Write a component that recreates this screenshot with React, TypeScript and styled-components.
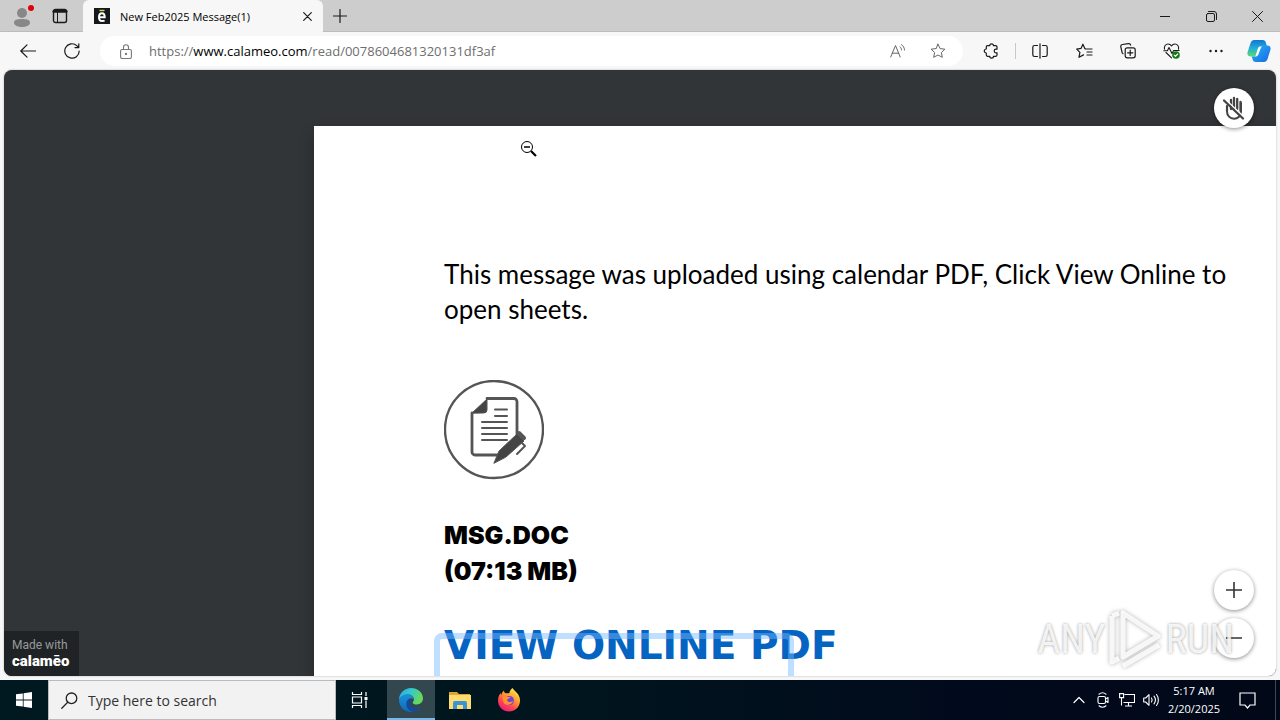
import React from 'react';
import styled, { createGlobalStyle } from 'styled-components';

const ui = '"Open Sans", "Noto Sans", sans-serif';

const GlobalStyle = createGlobalStyle`
  * { box-sizing: border-box; }
  html, body { margin: 0; padding: 0; }
  body { font-family: ${ui}; background: #f7f7f7; color: #000; }
  button, input { font: inherit; color: inherit; border: 0; background: none; padding: 0; margin: 0; }
  svg { display: block; flex: none; }
`;

const Screen = styled.div`
  display: flex;
  flex-direction: column;
  height: 100vh;
  overflow: hidden;
`;

/* ---------- browser chrome ---------- */

const TabBar = styled.header`
  display: flex;
  flex: none;
  height: 32px;
  background: #cdcdcd;
  box-shadow: inset 0 -1px 0 #bcbcbc;
`;

const IconButton = styled.button<{ $w?: number; $h?: number; $color?: string }>`
  display: flex;
  align-items: center;
  justify-content: center;
  flex: none;
  width: ${(p) => p.$w ?? 44}px;
  height: ${(p) => p.$h ?? 32}px;
  color: ${(p) => p.$color ?? '#1a1a1a'};
`;

const Tab = styled.div`
  display: flex;
  align-items: center;
  width: 240px;
  margin-left: 8px;
  padding: 0 4px 0 11px;
  border-radius: 6px 6px 0 0;
  background: #f7f7f7;
  font-size: 11px;
`;

const TabTitle = styled.span`
  flex: 1;
  margin-left: 10px;
  white-space: nowrap;
`;

const Spacer = styled.div`
  flex: 1;
`;

const Toolbar = styled.nav`
  display: flex;
  align-items: center;
  flex: none;
  height: 38px;
  padding-left: 6px;
  background: #f7f7f7;
`;

const AddressBar = styled.div`
  display: flex;
  align-items: center;
  flex: 1;
  height: 30px;
  margin-left: 6px;
  margin-right: 6px;
  padding: 0 5px 0 6px;
  border-radius: 15px;
  background: #fff;
`;

const Url = styled.div`
  flex: 1;
  margin-left: 3px;
  font-size: 13px;
  color: #6e6e6e;
  white-space: nowrap;

  b { font-weight: 400; color: #000; }
`;

const Divider = styled.i`
  width: 1px;
  height: 16px;
  margin: 0 2px;
  background: #c8c8c8;
`;

/* ---------- document viewer ---------- */

const Viewer = styled.main`
  position: relative;
  display: flex;
  flex: 1;
  min-height: 0;
  margin: 0 4px 4px;
  padding: 56px 0 0 310px;
  overflow: hidden;
  border-radius: 8px;
  background: #313537;
  box-shadow: 0 0 2px #aaa;
`;

const Paper = styled.article`
  flex: 1;
  padding: 131px 20px 0 130px;
  background: #fff;
  box-shadow: 0 8px 14px rgba(0, 0, 0, 0.25);
`;

const Message = styled.p`
  margin: 0;
  font: 26px/35px Lato, Carlito, sans-serif;
`;

const DocBadge = styled.svg`
  margin-top: 53px;
`;

const FileInfo = styled.p`
  margin: 37px 0 0;
  font: 900 25px/36px Inter, sans-serif;
`;

const LinkRow = styled.div`
  position: relative;
  margin-top: 32px;
`;

const ViewLink = styled.a`
  color: #0563c1;
  font: 700 39px/50px "DejaVu Sans", sans-serif;
  text-decoration: none;
  white-space: nowrap;
`;

const LinkArea = styled.span`
  position: absolute;
  top: 12px;
  left: -10px;
  width: 360px;
  height: 80px;
  border: 6px solid rgba(115, 185, 255, 0.45);
  border-radius: 8px;
  pointer-events: none;
`;

const Pointer = styled.svg`
  position: absolute;
  top: 70px;
  left: 516px;
`;

const RoundButton = styled.button`
  display: flex;
  align-items: center;
  justify-content: center;
  width: 40px;
  height: 40px;
  border-radius: 50%;
  background: #fff;
  color: #333;
  box-shadow: 0 1px 4px rgba(0, 0, 0, 0.45);
`;

const TopControl = styled.div`
  position: absolute;
  top: 18px;
  right: 22px;
`;

const ZoomControls = styled.div`
  position: absolute;
  right: 22px;
  bottom: 18px;
  display: grid;
  gap: 8px;
`;

const MadeWith = styled.a`
  position: absolute;
  left: 0;
  bottom: 0;
  display: flex;
  flex-direction: column;
  width: 75px;
  height: 45px;
  padding: 6px 8px;
  background: #202325;
  color: #989a9b;
  font: 12px/16px Roboto, sans-serif;
  text-decoration: none;
  white-space: nowrap;

  strong { color: #fff; font: 900 15px/16px Roboto, sans-serif; }
`;

const Watermark = styled.div`
  position: absolute;
  right: 42px;
  bottom: 4px;
  display: flex;
  align-items: center;
  gap: 2px;
  color: rgba(255, 255, 255, 0.85);
  font: 40px/64px "Liberation Sans Narrow", "Roboto Condensed", sans-serif;
  text-shadow: 0 0 3px rgba(0, 0, 0, 0.4);
  pointer-events: none;

  svg { filter: drop-shadow(0 0 2px rgba(0, 0, 0, 0.35)); }
`;

/* ---------- taskbar ---------- */

const Taskbar = styled.footer`
  display: flex;
  align-items: stretch;
  flex: none;
  height: 40px;
  background: linear-gradient(90deg, #001920 0%, #00151e 45%, #010a1c 75%, #010818 100%);
  color: #fff;
`;

const TaskButton = styled.button<{ $active?: boolean }>`
  display: flex;
  align-items: center;
  justify-content: center;
  flex: none;
  width: 48px;
  margin: 0 1px 0 ${(p) => (p.$active ? 2 : 0)}px;
  background: ${(p) => (p.$active ? '#33474e' : 'transparent')};
  box-shadow: ${(p) => (p.$active ? 'inset 0 -2px 0 #76b9ed' : 'none')};
`;

const Search = styled.label`
  display: flex;
  align-items: center;
  gap: 10px;
  flex: none;
  width: 288px;
  margin: 0 0 0 -1px;
  padding-left: 12px;
  border: 1px solid #b8bcbe;
  background: #f2f2f2;
  color: #222;
`;

const SearchInput = styled.input`
  flex: 1;
  min-width: 0;
  outline: 0;
  font-size: 14px;

  &::placeholder { color: #333; opacity: 1; }
`;

const Tray = styled.div`
  display: flex;
  align-items: center;
  margin-left: auto;
`;

const Clock = styled.time`
  width: 62px;
  font-size: 11px;
  line-height: 18px;
  text-align: center;
  white-space: nowrap;
`;

const DesktopEdge = styled.i`
  width: 1px;
  height: 40px;
  margin: 0 4px 0 6px;
  background: #3f4654;
`;

const line = { fill: 'none', stroke: 'currentColor', strokeLinecap: 'round', strokeLinejoin: 'round' } as const;

function BrowserTabs() {
  return (
    <TabBar>
      <IconButton $w={44} aria-label="Profile">
        <svg width="24" height="26" viewBox="0 0 24 26">
          <circle cx="12" cy="10" r="5" fill="#888" />
          <path d="M4 19.500c0-3 4-3.500 8-3.500s8 .5 8 3.500c0 3-4 4.500-8 4.500s-8-1.500-8-4.500z" fill="#888" />
          <circle cx="21" cy="5" r="3" fill="#e3000b" />
        </svg>
      </IconButton>
      <IconButton $w={31} aria-label="Tab actions">
        <svg width="16" height="16" viewBox="0 0 16 16" {...line}>
          <rect x="1.500" y="1.500" width="13" height="13" rx="2" strokeWidth="1.400" />
          <path d="M2 3.200h12" strokeWidth="3" />
          <path d="M5.500 4v10" />
        </svg>
      </IconButton>
      <Tab>
        <svg width="16" height="16" viewBox="0 0 16 16">
          <path d="M0 0h16v16H0z" fill="#15191b" />
          <path d="M5.500 2.500h5" stroke="#d5e04d" strokeWidth="1.400" />
          <path d="M5.500 9.300h5.200c0-3-1-4-2.700-4s-3 1.200-3 3.900c0 2.600 1.200 3.900 3.200 3.900 1 0 1.800-.2 2.400-.6" fill="none" stroke="#fff" strokeWidth="2" />
        </svg>
        <TabTitle>New Feb2025 Message(1)</TabTitle>
        <IconButton $w={24} $h={24} aria-label="Close tab">
          <svg width="9" height="9" viewBox="0 0 9 9" {...line} strokeWidth="1.200"><path d="M.7.7l7.600 7.600M8.300.7L.7 8.300" /></svg>
        </IconButton>
      </Tab>
      <IconButton $w={34} aria-label="New tab">
        <svg width="14" height="14" viewBox="0 0 14 14" {...line} strokeWidth="1.200"><path d="M7 .5v13M.5 7h13" /></svg>
      </IconButton>
      <Spacer />
      <IconButton $w={46} aria-label="Minimize">
        <svg width="10" height="10" viewBox="0 0 10 10" {...line}><path d="M0 5.500h10" /></svg>
      </IconButton>
      <IconButton $w={46} aria-label="Restore">
        <svg width="11" height="11" viewBox="0 0 11 11" {...line}>
          <rect x=".5" y="2.500" width="8" height="8" rx="1.500" />
          <path d="M2.500.500H8a2.500 2.500 0 0 1 2.500 2.500v5.500" />
        </svg>
      </IconButton>
      <IconButton $w={46} aria-label="Close window">
        <svg width="11" height="11" viewBox="0 0 11 11" {...line}><path d="M.5.5l10 10M10.500.5l-10 10" /></svg>
      </IconButton>
    </TabBar>
  );
}

const star = 'M8 1.200l2.100 4.400 4.800.6-3.500 3.300.9 4.800L8 12l-4.300 2.300.9-4.800L1.100 6.200l4.800-.6z';

function BrowserToolbar() {
  return (
    <Toolbar>
      <IconButton aria-label="Back">
        <svg width="16" height="14" viewBox="0 0 16 14" {...line} strokeWidth="1.200"><path d="M15.500 7H.8M7 .8L.8 7 7 13.200" /></svg>
      </IconButton>
      <IconButton aria-label="Refresh">
        <svg width="16" height="16" viewBox="0 0 16 16" {...line} strokeWidth="1.200"><path d="M15.200 8A7.200 7.200 0 1 1 12.800 2.600L14.500 4.300M14.800.8v3.800H11" /></svg>
      </IconButton>
      <AddressBar>
        <IconButton $w={40} $h={28} $color="#777" aria-label="View site information">
          <svg width="12" height="15" viewBox="0 0 12 15" {...line} strokeWidth="1.100">
            <rect x=".6" y="5.500" width="10.800" height="9" rx="1.500" />
            <path d="M3.500 5.500V3.200a2.500 2.500 0 0 1 5 0v2.300" />
            <circle cx="6" cy="10" r=".6" fill="currentColor" />
          </svg>
        </IconButton>
        <Url role="textbox" aria-label="Address">https://<b>www.calameo.com</b>/read/0078604681320131df3af</Url>
        <IconButton $w={40} $h={28} $color="#666" aria-label="Read aloud">
          <svg width="16" height="14" viewBox="0 0 16 14" {...line}>
            <path d="M.7 13L5.500 1.500 10.200 13M2.300 9.200h6.400" />
            <path d="M10 2.800c1 .8 1.500 1.900 1.500 3.200M11.500.700c1.900 1.200 3 3.200 3 5.300" />
          </svg>
        </IconButton>
        <IconButton $w={40} $h={28} $color="#666" aria-label="Add to favorites">
          <svg width="16" height="16" viewBox="0 0 16 16" {...line}><path d={star} /></svg>
        </IconButton>
      </AddressBar>
      <IconButton aria-label="Extensions">
        <svg width="16" height="16" viewBox="0 0 16 16" {...line} strokeWidth="1.200">
          <path d="M4.500 2.700h2.200a1.900 1.900 0 0 1 3.800 0h2.300a1.200 1.200 0 0 1 1.200 1.200v2.300h-1a1.800 1.800 0 0 0 0 3.600h1v2.300a1.200 1.200 0 0 1-1.200 1.200h-2.300a1.900 1.900 0 0 1-3.800 0H4.500a1.200 1.200 0 0 1-1.200-1.200V10a2 2 0 0 1 0-4V3.900a1.200 1.200 0 0 1 1.200-1.200z" />
        </svg>
      </IconButton>
      <Divider />
      <IconButton aria-label="Split screen">
        <svg width="16" height="16" viewBox="0 0 16 16" {...line} strokeWidth="1.200"><path d="M8 .8v14.400M5.500 2.500h-3a1.700 1.700 0 0 0-1.700 1.700v7.600a1.700 1.700 0 0 0 1.700 1.700h3M10.500 2.500h3a1.700 1.700 0 0 1 1.700 1.700v7.600a1.700 1.700 0 0 1-1.700 1.700h-3" /></svg>
      </IconButton>
      <IconButton aria-label="Favorites">
        <svg width="17" height="16" viewBox="0 0 17 16" {...line} strokeWidth="1.200"><path d="M10 6h6M11 9h5M11 12h5M9.500 5.800L8.800 5.600 6.900 1.200 5 5.400l-4.300.7 3.200 3.200-.9 5 4.500-2.400" /></svg>
      </IconButton>
      <IconButton aria-label="Collections">
        <svg width="16" height="16" viewBox="0 0 16 16" {...line} strokeWidth="1.200">
          <rect x="5.200" y="4.800" width="10" height="10" rx="2" />
          <path d="M10.200 7.200v5.200M7.600 9.800h5.200M3 10.700A2 2 0 0 1 2 9L.8 3.800A2 2 0 0 1 2.300 1.500L8.500.7a2 2 0 0 1 2.200 1.500" />
        </svg>
      </IconButton>
      <IconButton aria-label="Browser essentials">
        <svg width="18" height="16" viewBox="0 0 18 16" {...line} strokeWidth="1.100">
          <path d="M1.500 6.200C.8 3.200 2.700 1 5 1c1.700 0 2.800.8 3.500 2C9.200 1.800 10.300 1 12 1c2.300 0 4.200 2.200 3.500 5.200M3 9.500l5.500 5.300M.8 7.800h3.600L6 4.500l3 6 1.600-3h5.600" />
          <circle cx="13" cy="12" r="3.800" fill="#117a16" stroke="none" />
          <path d="M11.300 12.100l1.200 1.200 2.200-2.300" stroke="#fff" />
        </svg>
      </IconButton>
      <IconButton aria-label="Settings and more">
        <svg width="14" height="4" viewBox="0 0 14 4" fill="currentColor"><circle cx="1.500" cy="2" r="1.200" /><circle cx="7" cy="2" r="1.200" /><circle cx="12.500" cy="2" r="1.200" /></svg>
      </IconButton>
      <IconButton $w={42} aria-label="Copilot">
        <svg width="24" height="22" viewBox="0 0 26 24">
          <defs>
            <linearGradient id="cpA" x1="0" y1="0" x2="0" y2="1"><stop offset="0" stopColor="#1275d8" /><stop offset=".5" stopColor="#22aed5" /><stop offset="1" stopColor="#5cdc70" /></linearGradient>
            <linearGradient id="cpB" x1="0" y1="0" x2="1" y2="1"><stop offset="0" stopColor="#27b5f0" /><stop offset="1" stopColor="#1767e8" /></linearGradient>
          </defs>
          <path d="M8 0h9c2 0 3 1 3.500 3l1.200 4H18c-2 0-3 1-3.700 3l-1.700 5c-.6 2-1.600 3-3.600 3H4c-3 0-4.300-2-3.400-5L3.500 4C4.200 1.500 5.500 0 8 0z" fill="url(#cpA)" />
          <path d="M18 6h4c3 0 4.300 2 3.400 5l-2.800 9c-.7 2.500-2 4-4.500 4H9.500c-2 0-3-1-3.500-3l-1-3h4c2 0 3-1 3.600-3l1.700-5C15 7 16 6 18 6z" fill="url(#cpB)" />
          <path d="M13.500 7H17c-1.500.3-2.200 1.500-2.600 2.700L12.500 15c-.6 1.700-1.500 2.700-3.500 3h0l2.500-8c.5-1.500 1-2.600 2-3z" fill="#fff" />
        </svg>
      </IconButton>
    </Toolbar>
  );
}

function DocumentViewer() {
  return (
    <Viewer>
      <Paper>
        <Message>This message was uploaded using calendar PDF, Click View Online to open sheets.</Message>
        <DocBadge width="100" height="100" viewBox="0 0 100 100" fill="none" stroke="#555" strokeLinecap="round" strokeLinejoin="round">
          <ellipse cx="50" cy="49.500" rx="49" ry="48.500" strokeWidth="2.400" />
          <path d="M43 18.500h27a3 3 0 0 1 3 3v34M56 75H31a3 3 0 0 1-3-3V33" strokeWidth="2.800" />
          <path d="M28 33l15-14v11a3 3 0 0 1-3 3z" fill="#444" />
          <path d="M51 29.500h12M51 36h12M38 42h25M38 48h25M38 54h25M38 60h25" strokeWidth="2" />
          <path d="M50 83l5-12 18-17 7 7-18 16z" fill="#444" strokeWidth="1" />
          <path d="M75 53l5 5" strokeWidth="4" />
          <path d="M78 63l3 3-8 8" strokeWidth="2" />
        </DocBadge>
        <FileInfo>MSG.DOC<br />(07:13 MB)</FileInfo>
        <LinkRow>
          <ViewLink href="#view">VIEW ONLINE PDF</ViewLink>
          <LinkArea />
        </LinkRow>
      </Paper>

      <Pointer width="18" height="18" viewBox="0 0 18 18" fill="none" stroke="#000">
        <circle cx="7" cy="7" r="5.500" />
        <path d="M4 7h6" strokeWidth="1.600" />
        <path d="M11 11l5 5" strokeWidth="2.200" />
      </Pointer>

      <TopControl>
        <RoundButton aria-label="Disable hand tool">
          <svg width="24" height="26" viewBox="0 0 24 26" {...line} stroke="#444">
            <path d="M5 11.500v5c0 4 3 7.200 7 7.200s7-3 7-7.200V8" strokeWidth="2" />
            <path d="M9 5v9M12 3v11M15.200 4v10M18.500 7v9" strokeWidth="2.300" />
            <path d="M5 11v5" strokeWidth="2.200" />
            <path d="M3.500 4.500l19 18" stroke="#fff" strokeWidth="1.500" />
            <path d="M2 5.500l19 18" strokeWidth="2.300" />
          </svg>
        </RoundButton>
      </TopControl>

      <ZoomControls>
        <RoundButton aria-label="Zoom in">
          <svg width="16" height="16" viewBox="0 0 16 16" stroke="currentColor" strokeWidth="1.600"><path d="M8 0v16M0 8h16" /></svg>
        </RoundButton>
        <RoundButton aria-label="Zoom out">
          <svg width="16" height="16" viewBox="0 0 16 16" stroke="currentColor" strokeWidth="1.600"><path d="M0 8h16" /></svg>
        </RoundButton>
      </ZoomControls>

      <Watermark>
        <span>ANY</span>
        <svg width="56" height="64" viewBox="0 0 56 64" fill="none" stroke="#fff" strokeOpacity=".85" strokeWidth="5" strokeLinejoin="round">
          <path d="M4 8v46l7-4M4 8l7-3M15 5v44L50 28z" />
          <path d="M15 58L51 37" />
        </svg>
        <span>RUN</span>
      </Watermark>

      <MadeWith href="#calameo">
        Made with
        <strong>calamēo</strong>
      </MadeWith>
    </Viewer>
  );
}

function WindowsTaskbar() {
  return (
    <Taskbar>
      <TaskButton aria-label="Start">
        <svg width="16" height="16" viewBox="0 0 16 16" fill="#fff"><path d="M0 2.300l6.800-.9v6.200H0zM7.600 1.200L16 0v7.600H7.600zM0 8.400h6.800v6.200L0 13.700zM7.600 8.400H16V16l-8.400-1.200z" /></svg>
      </TaskButton>
      <Search>
        <svg width="17" height="17" viewBox="0 0 17 17" {...line} strokeWidth="1.300"><circle cx="10.500" cy="6.300" r="5.300" /><path d="M6.700 10.200L.8 16.200" /></svg>
        <SearchInput type="text" placeholder="Type here to search" aria-label="Type here to search" />
      </Search>
      <TaskButton aria-label="Task view">
        <svg width="18" height="16" viewBox="0 0 18 16" fill="none" stroke="#fff" strokeWidth="1.200">
          <path d="M1.500 0v2.500h9V0M1.500 16v-2.500h9V16M1.500 5h9v6h-9zM15 0v4M15 8.500V16" />
          <path d="M13.500 5h3v3h-3z" fill="#fff" stroke="none" />
        </svg>
      </TaskButton>
      <TaskButton $active aria-label="Microsoft Edge">
        <svg width="24" height="24" viewBox="0 0 24 24">
          <defs>
            <linearGradient id="edA" x1="0" y1="0" x2="1" y2=".4"><stop offset="0" stopColor="#2aa8e0" /><stop offset=".5" stopColor="#35c9cf" /><stop offset="1" stopColor="#67d958" /></linearGradient>
            <linearGradient id="edB" x1="0" y1="0" x2="0" y2="1"><stop offset="0" stopColor="#1b91dd" /><stop offset="1" stopColor="#1167b8" /></linearGradient>
          </defs>
          <path d="M0 12C0 5 5.400 0 12 0s12 4.700 12 10.300c0 4-3 6.200-6 6.200-2.500 0-4.300-.8-4.300-1.800 0-.8 1.200-1.200 1.200-3.200C15 8.500 12.200 6.500 9 6.500 4.500 6.500 1 9 0 12z" fill="url(#edA)" />
          <path d="M0 12c.7-3.500 4.300-5.500 8.500-5.500 3.500 0 6 2 6.300 4.500C14 9.800 8.500 10 8.500 15c0 5 5 7.500 13 3.800C19.300 22 16 24 12 24 5.500 24 0 19 0 12z" fill="url(#edB)" />
          <path d="M12.500 10.200C9 10.500 7 13 7.300 16.500 7.600 20.500 11 23.500 14.500 23.700c3-.6 5.500-2.600 7-4.900-5 2.500-9.500 1-10.500-3-.4-2 .2-4 1.500-5.600z" fill="#134a96" />
        </svg>
      </TaskButton>
      <TaskButton aria-label="File Explorer">
        <svg width="22" height="19" viewBox="0 0 22 19">
          <path d="M0 1h8l2 2h11v6H0z" fill="#e2a532" />
          <path d="M0 4h22v14H0z" fill="#ffdc70" />
          <path d="M4 18v-6a2 2 0 0 1 2-2h10a2 2 0 0 1 2 2v6h-4v-4H8v4z" fill="#3b93d3" />
        </svg>
      </TaskButton>
      <TaskButton aria-label="Firefox">
        <svg width="24" height="24" viewBox="0 0 24 24">
          <defs>
            <linearGradient id="ffA" x1=".8" y1="0" x2=".2" y2="1"><stop offset="0" stopColor="#fff04a" /><stop offset=".4" stopColor="#ff9a2e" /><stop offset=".7" stopColor="#ff4250" /><stop offset="1" stopColor="#e31587" /></linearGradient>
          </defs>
          <path d="M15.500 0c1 2 3 3 4.500 5 2 2.300 3.300 5 3 8.300C22.500 19.500 18 23.500 12 23.500S1 19 1 12.500C1 9 2.200 7 3.500 5c.1 1 .4 1.500.8 2C4.700 5 6 3.300 7 2.800 7 4.300 7.800 5 9 5.300h3.300C12.500 3 14 1 15.500 0z" fill="url(#ffA)" />
          <circle cx="12.500" cy="12.500" r="4.500" fill="#7542d8" />
          <path d="M5.500 9c1.500-1 3.500-.8 5 0h3c-.5 1.500-3 1.500-3.500 3 .5 2.500 4 2.500 6 1-1 4.500-7.500 5-9.500 1.500z" fill="#ff9130" />
        </svg>
      </TaskButton>

      <Tray>
        <IconButton $w={24} $color="#fff" aria-label="Show hidden icons">
          <svg width="12" height="8" viewBox="0 0 12 8" {...line} strokeWidth="1.200"><path d="M1 6.500l5-5 5 5" /></svg>
        </IconButton>
        <IconButton $w={24} $color="#fff" aria-label="Meet now">
          <svg width="12" height="16" viewBox="0 0 12 16" {...line} strokeWidth="1.100"><rect x="1" y="4.500" width="7.500" height="7" rx="1.500" /><path d="M8.500 7L11 5.500v5L8.500 9M2 2.200c2-1.600 5-1.600 7 0M2 13.800c2 1.600 5 1.600 7 0" /></svg>
        </IconButton>
        <IconButton $w={24} $color="#fff" aria-label="Network">
          <svg width="16" height="14" viewBox="0 0 16 14" fill="none" stroke="currentColor" strokeWidth="1.100"><path d="M5.500 1.500h10v8h-11M9.500 9.500v3M6 13h7M.6.600h4v4h-4zM2.500 4.500v8" /></svg>
        </IconButton>
        <IconButton $w={24} $color="#fff" aria-label="Volume">
          <svg width="17" height="14" viewBox="0 0 17 14" {...line} strokeWidth="1.100"><path d="M.7 5h2L6 1.700v10.600L2.700 9h-2zM8.500 5c.8 1.200.8 2.800 0 4M11 3.200c1.700 2.200 1.700 5.400 0 7.600M13.500 1.500c2.500 3.200 2.500 7.800 0 11" /></svg>
        </IconButton>
        <Clock>5:17 AM<br />2/20/2025</Clock>
        <IconButton $w={44} $color="#fff" aria-label="Notifications">
          <svg width="17" height="17" viewBox="0 0 17 17" fill="none" stroke="currentColor" strokeWidth="1.200"><path d="M1 1h15v12h-5l-2.500 3L6 13H1z" /></svg>
        </IconButton>
        <DesktopEdge />
      </Tray>
    </Taskbar>
  );
}

export default function App() {
  return (
    <>
      <GlobalStyle />
      <Screen>
        <BrowserTabs />
        <BrowserToolbar />
        <DocumentViewer />
        <WindowsTaskbar />
      </Screen>
    </>
  );
}
